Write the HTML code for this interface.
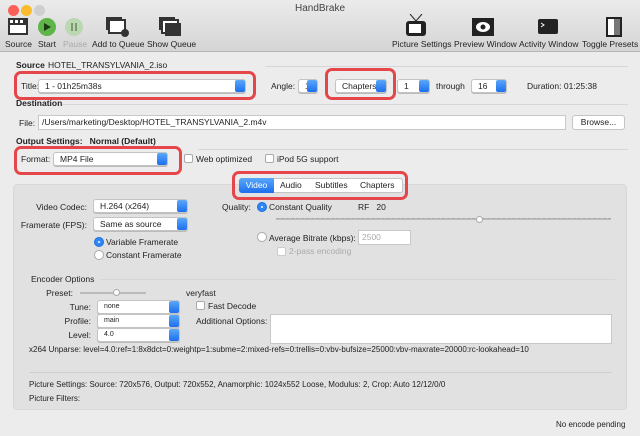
<!DOCTYPE html>
<html><head><meta charset="utf-8"><style>
*{box-sizing:border-box;margin:0;padding:0}
body{width:640px;height:436px;overflow:hidden;background:#ececec;font-family:"Liberation Sans",sans-serif;font-size:8.5px;color:#222;position:relative}
.a{position:absolute;white-space:nowrap}
.b{font-weight:bold}
.pop{position:absolute;background:#fff;border:1px solid #c4c4c4;border-radius:3px;height:14px;line-height:12px;padding-left:6px;box-shadow:0 1px 0 #bbb}
.pop::after{content:"";position:absolute;right:0;top:0;width:10px;height:12px;background:linear-gradient(#5aa8f8,#1c6ff0);border-radius:2px}
.fld{position:absolute;background:#fff;border:1px solid #c8c8c8;height:15px;line-height:13px;padding-left:3px}
.red{position:absolute;border:3px solid #e5464a;border-radius:7px}
.cb{position:absolute;width:9px;height:9px;border:1px solid #aaa;background:#fff;border-radius:2px}
.rd{position:absolute;width:10px;height:10px;border:1px solid #aaa;background:#fff;border-radius:50%}
.rd.on{background:#2f86f5;border-color:#1c6fe0}
.rd.on::after{content:"";position:absolute;left:3px;top:3px;width:2px;height:2px;background:#fff;border-radius:50%}
.line{position:absolute;height:1px;background:#d6d6d6}
.r{text-align:right}
</style></head><body>
<div class="a" style="left:0;top:0;width:640px;height:52px;background:linear-gradient(#ebebeb,#d5d5d5);border-bottom:1px solid #b5b5b5"></div>
<div class="a" style="left:8px;top:5px;width:11px;height:11px;border-radius:50%;background:#fc5f57"></div>
<div class="a" style="left:21px;top:5px;width:11px;height:11px;border-radius:50%;background:#fdbc2e"></div>
<div class="a" style="left:34px;top:5px;width:11px;height:11px;border-radius:50%;background:#cfcfcf"></div>
<div class="a" style="left:0;top:3px;width:640px;text-align:center;font-size:10px;color:#444">HandBrake</div>
<svg class="a" style="left:0;top:14px" width="640" height="24">
<rect x="8" y="4" width="20" height="17" fill="#333"/><rect x="10" y="11" width="16" height="8" fill="#fff"/><rect x="10" y="6" width="3" height="3" fill="#fff"/><rect x="15" y="6" width="3" height="3" fill="#fff"/><rect x="20" y="6" width="3" height="3" fill="#fff"/>
<circle cx="47" cy="13" r="9" fill="#5fb54a"/><path d="M44 9 L51 13 L44 17Z" fill="#1b3a12"/>
<circle cx="74" cy="13" r="9" fill="#bcd8b2"/><rect x="71" y="9" width="2" height="8" fill="#7a9a70"/><rect x="75" y="9" width="2" height="8" fill="#7a9a70"/>
<rect x="106" y="3" width="16" height="13" fill="#333"/><rect x="109" y="6" width="16" height="13" fill="#fff" stroke="#333" stroke-width="2"/><circle cx="125" cy="19" r="4" fill="#333"/>
<rect x="159" y="3" width="16" height="13" fill="#333"/><rect x="162" y="6" width="16" height="13" fill="#fff" stroke="#333" stroke-width="2"/><rect x="165" y="9" width="16" height="13" fill="#333"/>
<rect x="406" y="7" width="20" height="15" rx="3" fill="#222"/><path d="M410 0 L416 7 L422 0" stroke="#222" fill="none"/><rect x="409" y="10" width="12" height="9" fill="#fff"/>
<rect x="472" y="4" width="22" height="18" fill="#222"/><ellipse cx="483" cy="13" rx="7" ry="5" fill="#fff"/><circle cx="483" cy="13" r="2.5" fill="#222"/>
<rect x="538" y="5" width="20" height="15" rx="2" fill="#222"/><path d="M541 9 L544 11 L541 13" stroke="#fff" fill="none"/>
<rect x="607" y="4" width="14" height="18" fill="#fff" stroke="#222" stroke-width="2"/><rect x="614" y="5" width="6" height="16" fill="#777"/>
</svg>
<div class="a" style="left:5px;top:39px">Source</div>
<div class="a" style="left:38px;top:39px">Start</div>
<div class="a" style="left:63px;top:39px;color:#aaa">Pause</div>
<div class="a" style="left:92px;top:39px">Add to Queue</div>
<div class="a" style="left:147px;top:39px">Show Queue</div>
<div class="a" style="left:392px;top:39px">Picture Settings</div>
<div class="a" style="left:454px;top:39px">Preview Window</div>
<div class="a" style="left:519px;top:39px">Activity Window</div>
<div class="a" style="left:582px;top:39px">Toggle Presets</div>

<div class="a b" style="left:16px;top:60px">Source</div>
<div class="a" style="left:48px;top:60px">HOTEL_TRANSYLVANIA_2.iso</div>
<div class="line" style="left:265px;top:66px;width:363px"></div>
<div class="a" style="left:21px;top:81px">Title:</div>
<div class="pop" style="left:38px;top:79px;width:208px">1 - 01h25m38s</div>
<div class="a" style="left:271px;top:81px">Angle:</div>
<div class="pop" style="left:298px;top:79px;width:20px">1</div>
<div class="pop" style="left:335px;top:79px;width:52px">Chapters</div>
<div class="pop" style="left:397px;top:79px;width:33px">1</div>
<div class="a" style="left:436px;top:81px">through</div>
<div class="pop" style="left:471px;top:79px;width:36px">16</div>
<div class="a" style="left:527px;top:81px">Duration: 01:25:38</div>
<div class="red" style="left:14px;top:71px;width:242px;height:29px"></div>
<div class="red" style="left:325px;top:68px;width:71px;height:32px"></div>

<div class="a b" style="left:16px;top:98px">Destination</div>
<div class="line" style="left:62px;top:104px;width:566px"></div>
<div class="a" style="left:19px;top:118px">File:</div>
<div class="fld" style="left:38px;top:115px;width:528px">/Users/marketing/Desktop/HOTEL_TRANSYLVANIA_2.m4v</div>
<div class="a" style="left:572px;top:115px;width:53px;height:15px;background:#fff;border:1px solid #c4c4c4;border-radius:3px;text-align:center;line-height:13px">Browse...</div>
<div class="a b" style="left:16px;top:136px">Output Settings:&nbsp;&nbsp; Normal (Default)</div>
<div class="line" style="left:198px;top:149px;width:430px"></div>
<div class="a" style="left:21px;top:154px">Format:</div>
<div class="pop" style="left:53px;top:152px;width:115px">MP4 File</div>
<div class="cb" style="left:184px;top:154px"></div><div class="a" style="left:196px;top:154px">Web optimized</div>
<div class="cb" style="left:265px;top:154px"></div><div class="a" style="left:277px;top:154px">iPod 5G support</div>
<div class="red" style="left:14px;top:146px;width:168px;height:29px"></div>

<div class="a" style="left:13px;top:184px;width:614px;height:226px;background:#e1e1e1;border-radius:4px;border:1px solid #d8d8d8"></div>
<div class="a" style="left:239px;top:178px;width:164px;height:15px;background:#fff;border:1px solid #c4c4c4;border-radius:3px"></div>
<div class="a" style="left:239px;top:178px;width:35px;height:15px;background:linear-gradient(#5aa8f8,#1c6ff0);border-radius:3px 0 0 3px;color:#fff;text-align:center;line-height:15px">Video</div>
<div class="a" style="left:280px;top:180px">Audio</div>
<div class="a" style="left:315px;top:180px">Subtitles</div>
<div class="a" style="left:360px;top:180px">Chapters</div>
<div class="red" style="left:232px;top:171px;width:176px;height:29px"></div>

<div class="a r" style="left:10px;top:202px;width:77px">Video Codec:</div>
<div class="pop" style="left:93px;top:199px;width:95px">H.264 (x264)</div>
<div class="a r" style="left:10px;top:220px;width:77px">Framerate (FPS):</div>
<div class="pop" style="left:93px;top:217px;width:95px">Same as source</div>
<div class="rd on" style="left:94px;top:237px"></div><div class="a" style="left:106px;top:237px">Variable Framerate</div>
<div class="rd" style="left:94px;top:250px"></div><div class="a" style="left:106px;top:250px">Constant Framerate</div>
<div class="a" style="left:222px;top:202px">Quality:</div>
<div class="rd on" style="left:257px;top:202px"></div><div class="a" style="left:269px;top:202px">Constant Quality</div>
<div class="a" style="left:358px;top:202px">RF&nbsp;&nbsp; 20</div>
<div class="a" style="left:276px;top:218px;width:335px;height:2px;background:#bdbdbd;border-top:1px dashed #aaa"></div>
<div class="a" style="left:476px;top:216px;width:7px;height:7px;border-radius:50%;background:#fff;border:1px solid #aaa"></div>
<div class="rd" style="left:257px;top:232px"></div><div class="a" style="left:269px;top:233px">Average Bitrate (kbps):</div>
<div class="fld" style="left:358px;top:230px;width:53px;color:#aaa">2500</div>
<div class="cb" style="left:277px;top:247px;border-color:#ccc"></div><div class="a" style="left:289px;top:246px;color:#aaa">2-pass encoding</div>

<div class="a" style="left:31px;top:274px">Encoder Options</div>
<div class="line" style="left:100px;top:279px;width:515px"></div>
<div class="a r" style="left:10px;top:288px;width:63px">Preset:</div>
<div class="a" style="left:80px;top:292px;width:66px;height:2px;background:#bbb"></div>
<div class="a" style="left:113px;top:289px;width:7px;height:7px;border-radius:50%;background:#fff;border:1px solid #aaa"></div>
<div class="a" style="left:186px;top:288px">veryfast</div>
<div class="a r" style="left:10px;top:302px;width:81px">Tune:</div>
<div class="pop" style="left:97px;top:300px;width:83px;font-size:7px">none</div>
<div class="cb" style="left:196px;top:301px"></div><div class="a" style="left:208px;top:301px">Fast Decode</div>
<div class="a r" style="left:10px;top:316px;width:81px">Profile:</div>
<div class="pop" style="left:97px;top:314px;width:83px;font-size:7px">main</div>
<div class="a" style="left:196px;top:316px">Additional Options:</div>
<div class="a" style="left:270px;top:314px;width:342px;height:30px;background:#fff;border:1px solid #c8c8c8"></div>
<div class="a r" style="left:10px;top:330px;width:81px">Level:</div>
<div class="pop" style="left:97px;top:328px;width:83px;font-size:7px">4.0</div>
<div class="a" style="left:29px;top:345px;font-size:8px">x264 Unparse: level=4.0:ref=1:8x8dct=0:weightp=1:subme=2:mixed-refs=0:trellis=0:vbv-bufsize=25000:vbv-maxrate=20000:rc-lookahead=10</div>
<div class="line" style="left:29px;top:372px;width:583px;background:#d0d0d0"></div>
<div class="a" style="left:29px;top:380px;font-size:8px">Picture Settings: Source: 720x576, Output: 720x552, Anamorphic: 1024x552 Loose, Modulus: 2, Crop: Auto 12/12/0/0</div>
<div class="a" style="left:29px;top:394px;font-size:8px">Picture Filters:</div>
<div class="a" style="left:556px;top:420px;font-size:8px">No encode pending</div>
</body></html>
